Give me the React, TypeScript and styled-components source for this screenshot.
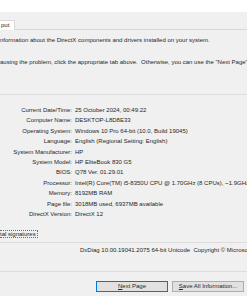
import React from "react";
import styled, { createGlobalStyle, css } from "styled-components";

const GlobalStyle = createGlobalStyle`
  html, body {
    margin: 0;
    padding: 0;
    background: #f0f0f0;
  }
  body {
    font-family: "Liberation Sans", Arial, sans-serif;
    font-size: 6px;
    color: #262626;
  }
`;

const rows: [string, string][] = [
  ["Current Date/Time:", "25 October 2024, 00:49:22"],
  ["Computer Name:", "DESKTOP-L8D8E33"],
  ["Operating System:", "Windows 10 Pro 64-bit (10.0, Build 19045)"],
  ["Language:", "English (Regional Setting: English)"],
  ["System Manufacturer:", "HP"],
  ["System Model:", "HP EliteBook 830 G5"],
  ["BIOS:", "Q78 Ver. 01.29.01"],
  ["Processor:", "Intel(R) Core(TM) i5-8350U CPU @ 1.70GHz (8 CPUs), ~1.9GHz"],
  ["Memory:", "8192MB RAM"],
  ["Page file:", "3018MB used, 6937MB available"],
  ["DirectX Version:", "DirectX 12"],
];

const App: React.FC = () => {
  return (
    <Page>
      <GlobalStyle />
      <TopStrip />
      <TabBar>
        <Tab>put</Tab>
      </TabBar>
      <Panel>
        <Intro>nformation about the DirectX components and drivers installed on your system.</Intro>
        <Intro second>
          ausing the problem, click the appropriate tab above.&nbsp; Otherwise, you can use the "Next Page"
          button below to visit each page in sequence.
        </Intro>
        <InfoGroup>
          {rows.map(([label, value]) => (
            <React.Fragment key={label}>
              <Label>{label}</Label>
              <Value>{value}</Value>
            </React.Fragment>
          ))}
        </InfoGroup>
        <CheckLabel>tal signatures</CheckLabel>
      </Panel>
      <Footer>
        <Copyright>DxDiag 10.00.19041.2075 64-bit Unicode&nbsp; Copyright © Microsoft. All rights reserved.</Copyright>
      </Footer>
      <ButtonBar>
        <Button primary>
          <u>N</u>ext Page
        </Button>
        <Button>
          <u>S</u>ave All Information...
        </Button>
        <Button>Exit</Button>
      </ButtonBar>
    </Page>
  );
};

const Page = styled.div`
  width: 247px;
  height: 296px;
  overflow: hidden;
  display: flex;
  flex-direction: column;
  white-space: nowrap;
`;

const TopStrip = styled.div`
  height: 12px;
  flex: none;
  background: #ffffff;
`;

const TabBar = styled.div`
  height: 17px;
  flex: none;
  display: flex;
  align-items: flex-end;
  border-bottom: 1px solid #d9d9d9;
`;

const Tab = styled.div`
  height: 9px;
  line-height: 9px;
  padding: 0 5px 0 1px;
  border: 1px solid #d9d9d9;
  border-left: none;
  border-bottom: none;
  background: #ffffff;
  margin-bottom: -1px;
`;

const Panel = styled.div`
  display: flex;
  flex-direction: column;
  padding-top: 5px;
`;

const Intro = styled.div<{ second?: boolean }>`
  height: 10px;
  line-height: 10px;
  overflow: hidden;
  ${(p) =>
    p.second &&
    css`
      margin-top: 12px;
    `}
`;

const InfoGroup = styled.div`
  margin-top: 27px;
  border-top: 1px solid #dcdcdc;
  padding-top: 10px;
  display: grid;
  grid-template-columns: 72px 1fr;
  column-gap: 3px;
  grid-auto-rows: 10.4px;
  line-height: 10.4px;
`;

const Label = styled.div`
  text-align: right;
`;

const Value = styled.div``;

const CheckLabel = styled.div`
  align-self: flex-start;
  margin-top: 11px;
  height: 6px;
  line-height: 6px;
  padding: 0 1px 0 0;
  border: 1px dotted #6b6b6b;
  border-left: none;
`;

const Footer = styled.div`
  margin-top: 4px;
  border-top: 1px solid #dcdcdc;
  height: 28px;
  border-bottom: 1px solid #dcdcdc;
  padding-left: 80px;
`;

const Copyright = styled.div`
  margin-top: 2px;
  line-height: 10px;
`;

const ButtonBar = styled.div`
  display: flex;
  gap: 4px;
  padding: 9px 0 0 96px;
`;

const Button = styled.div<{ primary?: boolean }>`
  flex: none;
  width: 70px;
  height: 9px;
  line-height: 9px;
  text-align: center;
  background: #e1e1e1;
  border: 1px solid ${(p) => (p.primary ? "#0078d7" : "#adadad")};
  u {
    text-decoration: underline;
  }
`;

export default App;
